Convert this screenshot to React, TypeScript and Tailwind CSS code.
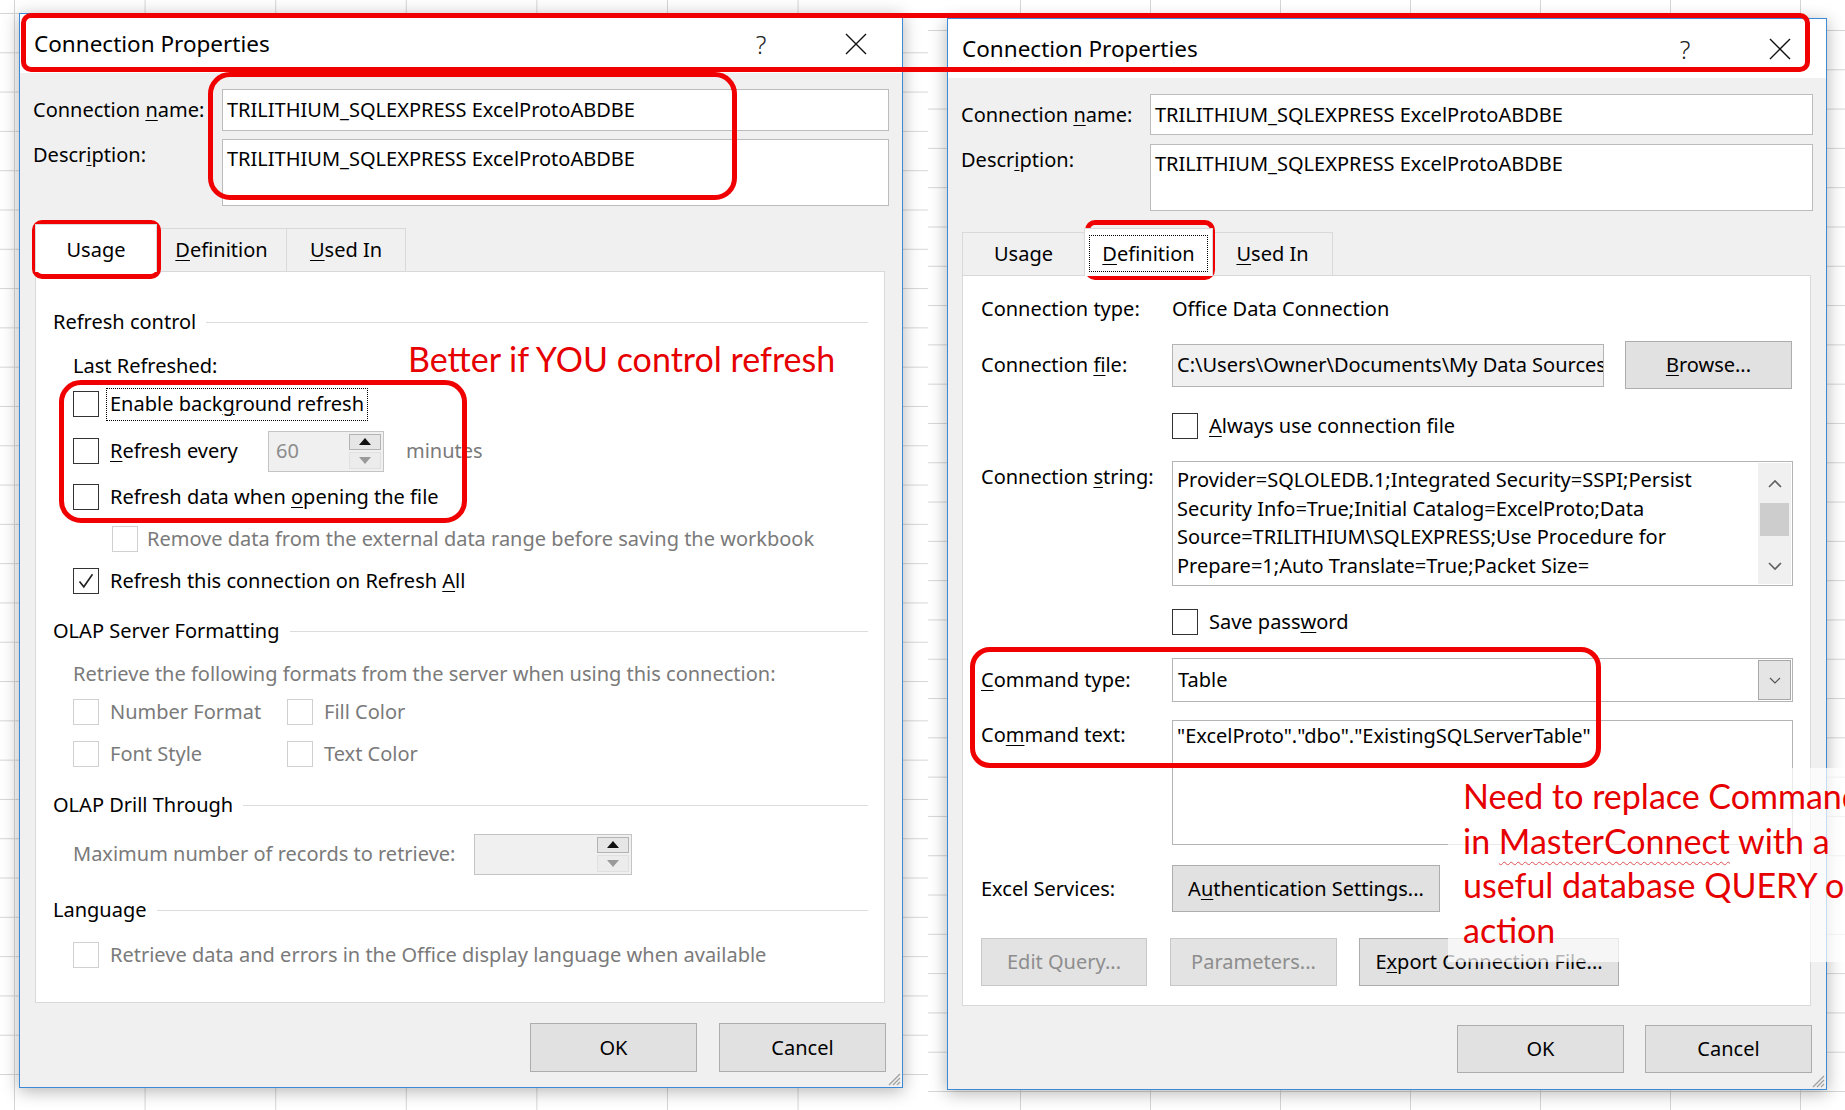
import type { ReactNode } from "react";

function U({ children }: { children: ReactNode }) {
  return <span className="underline decoration-1 underline-offset-[3px]">{children}</span>;
}

function Box({ checked = false, disabled = false }: { checked?: boolean; disabled?: boolean }) {
  return (
    <span
      className={
        disabled
          ? "flex h-[26px] w-[26px] shrink-0 items-center justify-center border-[1.5px] border-[#d0d0d0] bg-white"
          : "flex h-[26px] w-[26px] shrink-0 items-center justify-center border-[1.5px] border-[#333333] bg-white"
      }
    >
      {checked && (
        <svg width="20" height="20" viewBox="0 0 20 20">
          <path d="M3.5 10.5 L7.8 15.8 L16.5 3.2" fill="none" stroke="#222" strokeWidth="1.6" />
        </svg>
      )}
    </span>
  );
}

function Spin({ className, value }: { className: string; value?: string }) {
  return (
    <div className={`flex shrink-0 items-stretch border border-[#c4c4c4] bg-[#f0f0f0] ${className}`}>
      <span className="flex flex-1 items-center pl-[7px] text-[#8c8c8c]">{value}</span>
      <div className="flex w-[34px] flex-col gap-[2px] py-[2px] pr-[2px]">
        <span className="flex flex-1 items-center justify-center border border-[#b3b3b3] bg-[#e6e6e6]">
          <svg width="12" height="7" viewBox="0 0 12 7">
            <path d="M6 0 L12 7 L0 7 Z" fill="#111" />
          </svg>
        </span>
        <span className="flex flex-1 items-center justify-center border border-[#e0e0e0] bg-[#ececec]">
          <svg width="12" height="7" viewBox="0 0 12 7">
            <path d="M0 0 L12 0 L6 7 Z" fill="#9a9a9a" />
          </svg>
        </span>
      </div>
    </div>
  );
}

function Btn({ className, children, disabled = false }: { className: string; children: ReactNode; disabled?: boolean }) {
  return (
    <div
      className={`flex shrink-0 items-center justify-center border ${
        disabled ? "border-[#c8c8c8] bg-[#e3e3e3] text-[#8d8d8d]" : "border-[#adadad] bg-[#e1e1e1] text-black"
      } ${className}`}
    >
      {children}
    </div>
  );
}

function Row({ className = "", children }: { className?: string; children: ReactNode }) {
  return <div className={`flex h-[36px] items-center whitespace-nowrap ${className}`}>{children}</div>;
}

function Section({ title, className = "" }: { title: string; className?: string }) {
  return (
    <div className={`flex h-[36px] items-center whitespace-nowrap ${className}`}>
      <span>{title}</span>
      <div className="ml-[10px] h-px flex-1 bg-[#dcdcdc]" />
    </div>
  );
}

function TitleBar() {
  return (
    <div className="flex h-[59px] shrink-0 items-center bg-white pl-[14px] pr-[22px]">
      <span className="flex-1 text-[22.5px]">Connection Properties</span>
      <span className="flex w-[48px] justify-center text-[25px] font-light text-[#222]">?</span>
      <span className="ml-[47px] flex w-[48px] justify-center">
        <svg width="22" height="22" viewBox="0 0 22 22">
          <path d="M1 1 L21 21 M21 1 L1 21" stroke="#111" strokeWidth="1.4" />
        </svg>
      </span>
    </div>
  );
}

function Grip() {
  return (
    <svg className="absolute bottom-[1px] right-[1px]" width="16" height="16" viewBox="0 0 16 16">
      <path d="M15 4 L4 15 M15 8 L8 15 M15 12 L12 15" stroke="#a0a0a0" strokeWidth="1.3" />
    </svg>
  );
}

function NameFields({ inputH, gap }: { inputH: string; gap: string }) {
  return (
    <>
      <div className={`mt-[16px] flex ${inputH}`}>
        <div className="flex w-[189px] shrink-0 items-center">
          <span>
            Connection <U>n</U>ame:
          </span>
        </div>
        <div className="flex h-full flex-1 items-center whitespace-nowrap border border-[#bcbcbc] bg-white pl-[4px]">
          TRILITHIUM_SQLEXPRESS ExcelProtoABDBE
        </div>
      </div>
      <div className={`flex h-[67px] ${gap}`}>
        <div className="w-[189px] shrink-0 pt-[2px]">
          Descr<U>i</U>ption:
        </div>
        <div className="h-full flex-1 whitespace-nowrap border border-[#bcbcbc] bg-white pl-[4px] pt-[5px]">
          TRILITHIUM_SQLEXPRESS ExcelProtoABDBE
        </div>
      </div>
    </>
  );
}

function Tab({ active = false, className, children }: { active?: boolean; className: string; children: ReactNode }) {
  return (
    <div
      className={
        active
          ? `relative z-10 -mb-px flex h-[48px] items-center justify-center border border-b-0 border-[#d9d9d9] bg-white pt-[2px] ${className}`
          : `flex h-[43px] items-center justify-center border border-b-0 border-[#d9d9d9] bg-[#f0f0f0] ${className}`
      }
    >
      {children}
    </div>
  );
}

function LeftDialog() {
  return (
    <div className="relative flex h-[1075px] w-[884px] flex-col border border-[#3c8ad6] bg-[#f0f0f0] shadow-[0_3px_16px_rgba(0,0,0,0.3)]">
      <TitleBar />
      <div className="flex flex-col px-[13px]">
        <NameFields inputH="h-[42px]" gap="mt-[8px]" />
        <div className="ml-[2px] mt-[18px] flex h-[47px] items-end">
          <Tab active className="w-[122px]">Usage</Tab>
          <Tab className="-ml-px w-[131px]">
            <U>D</U>efinition
          </Tab>
          <Tab className="-ml-px w-[120px]">
            <U>U</U>sed In
          </Tab>
        </div>
        <div className="ml-[2px] h-[732px] w-[850px] border border-[#d9d9d9] bg-white pl-[17px] pr-[16px] pt-[32px]">
          <Section title="Refresh control" />
          <Row className="mt-[8px] pl-[20px]">Last Refreshed:</Row>
          <Row className="mt-[2px] gap-[7px] pl-[20px]">
            <Box />
            <span className="flex h-[33px] items-center border border-dotted border-black px-[3px]">
              <span>
                Enable back<U>g</U>round refresh
              </span>
            </span>
          </Row>
          <Row className="mt-[11px] pl-[20px]">
            <div className="flex w-[195px] items-center gap-[11px]">
              <Box />
              <span>
                <U>R</U>efresh every
              </span>
            </div>
            <Spin className="h-[41px] w-[116px]" value="60" />
            <span className="ml-[22px] text-[#7a7a7a]">minutes</span>
          </Row>
          <Row className="mt-[10px] gap-[11px] pl-[20px]">
            <Box />
            <span>
              Refresh data when <U>o</U>pening the file
            </span>
          </Row>
          <Row className="mt-[6px] gap-[9px] pl-[59px] text-[#7a7a7a]">
            <Box disabled />
            <span>Remove data from the external data range before saving the workbook</span>
          </Row>
          <Row className="mt-[6px] gap-[11px] pl-[20px]">
            <Box checked />
            <span>
              Refresh this connection on Refresh <U>A</U>ll
            </span>
          </Row>
          <Section title="OLAP Server Formatting" className="mt-[14px]" />
          <Row className="mt-[7px] pl-[20px] text-[#7a7a7a]">
            Retrieve the following formats from the server when using this connection:
          </Row>
          <Row className="mt-[2px] pl-[20px] text-[#7a7a7a]">
            <div className="flex w-[214px] items-center gap-[11px]">
              <Box disabled />
              <span>Number Format</span>
            </div>
            <div className="flex items-center gap-[11px]">
              <Box disabled />
              <span>Fill Color</span>
            </div>
          </Row>
          <Row className="mt-[6px] pl-[20px] text-[#7a7a7a]">
            <div className="flex w-[214px] items-center gap-[11px]">
              <Box disabled />
              <span>Font Style</span>
            </div>
            <div className="flex items-center gap-[11px]">
              <Box disabled />
              <span>Text Color</span>
            </div>
          </Row>
          <Section title="OLAP Drill Through" className="mt-[15px]" />
          <Row className="mt-[13px] pl-[20px]">
            <span className="text-[#7a7a7a]">Maximum number of records to retrieve:</span>
            <Spin className="ml-[19px] h-[41px] w-[158px]" />
          </Row>
          <Section title="Language" className="mt-[20px]" />
          <Row className="mt-[9px] gap-[11px] pl-[20px] text-[#7a7a7a]">
            <Box disabled />
            <span>Retrieve data and errors in the Office display language when available</span>
          </Row>
        </div>
        <div className="mt-[20px] flex justify-end gap-[22px] pr-[3px]">
          <Btn className="h-[49px] w-[167px]">OK</Btn>
          <Btn className="h-[49px] w-[167px]">Cancel</Btn>
        </div>
      </div>
      <Grip />
    </div>
  );
}

function RightDialog() {
  return (
    <div className="relative flex h-[1072px] w-[880px] flex-col border border-[#3c8ad6] bg-[#f0f0f0] shadow-[0_3px_16px_rgba(0,0,0,0.3)]">
      <TitleBar />
      <div className="flex flex-col px-[13px]">
        <NameFields inputH="h-[41px]" gap="mt-[9px]" />
        <div className="ml-px mt-[17px] flex h-[47px] items-end">
          <Tab className="w-[123px]">Usage</Tab>
          <Tab active className="-ml-px w-[129px]">
            <div className="m-[4px] flex flex-1 items-center justify-center self-stretch border border-dotted border-black">
              <span>
                <U>D</U>efinition
              </span>
            </div>
          </Tab>
          <Tab className="-ml-px w-[121px]">
            <U>U</U>sed In
          </Tab>
        </div>
        <div className="ml-px flex h-[731px] w-[849px] flex-col border border-[#d9d9d9] bg-white pl-[18px] pr-[17px] pt-[15px]">
          <Row>
            <span className="w-[191px] shrink-0">Connection type:</span>
            <span>Office Data Connection</span>
          </Row>
          <div className="mt-[14px] flex h-[48px] items-center">
            <span className="w-[191px] shrink-0">
              Connection <U>f</U>ile:
            </span>
            <div className="flex h-[43px] w-[432px] items-center overflow-hidden whitespace-nowrap border border-[#b4b4b4] bg-[#f0f0f0] pl-[4px]">
              C:\Users\Owner\Documents\My Data Sources\TRILITHIUM_SQLEXPRESS ExcelProtoABDBE.odc
            </div>
            <Btn className="ml-[21px] h-[48px] w-[167px]">
              <span>
                <U>B</U>rowse...
              </span>
            </Btn>
          </div>
          <Row className="mt-[19px] gap-[11px] pl-[191px]">
            <Box />
            <span>
              <U>A</U>lways use connection file
            </span>
          </Row>
          <div className="mt-[17px] flex h-[125px]">
            <span className="w-[191px] shrink-0 pt-[2px]">
              Connection <U>s</U>tring:
            </span>
            <div className="flex w-[621px] border border-[#b4b4b4] bg-white">
              <div className="flex-1 overflow-hidden whitespace-nowrap pl-[4px] pt-[4px] leading-[28.7px]">
                <div>Provider=SQLOLEDB.1;Integrated Security=SSPI;Persist</div>
                <div>Security Info=True;Initial Catalog=ExcelProto;Data</div>
                <div>Source=TRILITHIUM\SQLEXPRESS;Use Procedure for</div>
                <div>Prepare=1;Auto Translate=True;Packet Size=</div>
              </div>
              <div className="my-px mr-px flex w-[33px] flex-col bg-[#f0f0f0]">
                <div className="flex h-[40px] items-center justify-center">
                  <svg width="14" height="9" viewBox="0 0 14 9">
                    <path d="M1 8 L7 2 L13 8" fill="none" stroke="#606060" strokeWidth="1.6" />
                  </svg>
                </div>
                <div className="mx-[2px] h-[33px] bg-[#cdcdcd]" />
                <div className="flex-1" />
                <div className="flex h-[36px] items-center justify-center">
                  <svg width="14" height="9" viewBox="0 0 14 9">
                    <path d="M1 1 L7 7 L13 1" fill="none" stroke="#606060" strokeWidth="1.6" />
                  </svg>
                </div>
              </div>
            </div>
          </div>
          <Row className="mt-[18px] gap-[11px] pl-[191px]">
            <Box />
            <span>
              Save pass<U>w</U>ord
            </span>
          </Row>
          <div className="mt-[18px] flex h-[44px] items-center">
            <span className="w-[191px] shrink-0">
              <U>C</U>ommand type:
            </span>
            <div className="flex h-full w-[621px] items-center border border-[#b4b4b4] bg-white pl-[5px]">
              <span className="flex-1">Table</span>
              <div className="mr-px flex h-[40px] w-[33px] items-center justify-center border border-[#a8a8a8] bg-[#e5e5e5]">
                <svg width="12" height="7" viewBox="0 0 12 7">
                  <path d="M1 1 L6 6 L11 1" fill="none" stroke="#555" strokeWidth="1.2" />
                </svg>
              </div>
            </div>
          </div>
          <div className="mt-[18px] flex h-[125px]">
            <span className="w-[191px] shrink-0 pt-px">
              Co<U>m</U>mand text:
            </span>
            <div className="w-[621px] whitespace-nowrap border border-[#b4b4b4] bg-white pl-[4px] pt-px">
              "ExcelProto"."dbo"."ExistingSQLServerTable"
            </div>
          </div>
          <div className="mt-[20px] flex h-[47px] items-center">
            <span className="w-[191px] shrink-0">Excel Services:</span>
            <Btn className="h-[47px] w-[268px]">
              <span>
                A<U>u</U>thentication Settings...
              </span>
            </Btn>
          </div>
          <div className="mt-[26px] flex h-[48px] items-center">
            <Btn disabled className="h-[48px] w-[166px]">
              Edit Query...
            </Btn>
            <Btn disabled className="ml-[23px] h-[48px] w-[167px]">
              Parameters...
            </Btn>
            <Btn className="ml-[22px] h-[48px] w-[260px]">
              <span>
                E<U>x</U>port Connection File...
              </span>
            </Btn>
          </div>
        </div>
        <div className="mt-[19px] flex justify-end gap-[21px] pr-px">
          <Btn className="h-[48px] w-[167px]">OK</Btn>
          <Btn className="h-[48px] w-[167px]">Cancel</Btn>
        </div>
      </div>
      <Grip />
    </div>
  );
}

export default function App() {
  return (
    <div className="relative flex h-[1110px] w-[1845px] overflow-hidden bg-white font-['Noto_Sans',sans-serif] text-[20px] leading-[28px] text-black">
      <div className="h-full w-[928px] shrink-0 pl-[19px] pt-[13px] [background-image:linear-gradient(to_right,#d6d6d6_1px,transparent_1px),linear-gradient(to_bottom,#d6d6d6_1px,transparent_1px)] [background-position:14px_13px] [background-size:130.6px_39.3px]">
        <LeftDialog />
      </div>
      <div className="h-full flex-1 pl-[19px] pt-[18px] [background-image:linear-gradient(to_right,#d6d6d6_1px,transparent_1px),linear-gradient(to_bottom,#d6d6d6_1px,transparent_1px)] [background-position:92px_30px] [background-size:130px_39.3px]">
        <RightDialog />
      </div>

      {/* red call-outs */}
      <div className="absolute left-[21px] top-[13px] h-[59px] w-[1789px] rounded-[10px] border-[5px] border-[#f00000]" />
      <div className="absolute left-[208px] top-[72px] h-[128px] w-[529px] rounded-[22px] border-[5px] border-[#f00000]" />
      <div className="absolute left-[32px] top-[220px] h-[59px] w-[129px] rounded-[10px] border-[5px] border-[#f00000]" />
      <div className="absolute left-[1085px] top-[220px] h-[60px] w-[130px] rounded-[10px] border-[5px] border-[#f00000]" />
      <div className="absolute left-[59px] top-[380px] h-[143px] w-[408px] rounded-[22px] border-[5px] border-[#f00000]" />
      <div className="absolute left-[970px] top-[647px] h-[121px] w-[631px] rounded-[20px] border-[5px] border-[#f00000]" />

      <div className="absolute left-[408px] top-[339px] whitespace-nowrap font-['Lato',sans-serif] text-[34px] leading-[40px] text-[#e60000]">
        Better if YOU control refresh
      </div>
      <div className="absolute left-[1448px] right-0 top-[768px] h-[194px] overflow-hidden whitespace-nowrap bg-white/70 pl-[15px] pt-[6px] font-['Lato',sans-serif] text-[34px] leading-[44.5px] text-[#e60000]">
        <div>Need to replace Command text</div>
        <div>
          in{" "}
          <span className="underline decoration-[#e05050] decoration-wavy decoration-1 underline-offset-[7px]">
            MasterConnect
          </span>{" "}
          with a
        </div>
        <div>useful database QUERY or</div>
        <div>action</div>
      </div>
    </div>
  );
}
